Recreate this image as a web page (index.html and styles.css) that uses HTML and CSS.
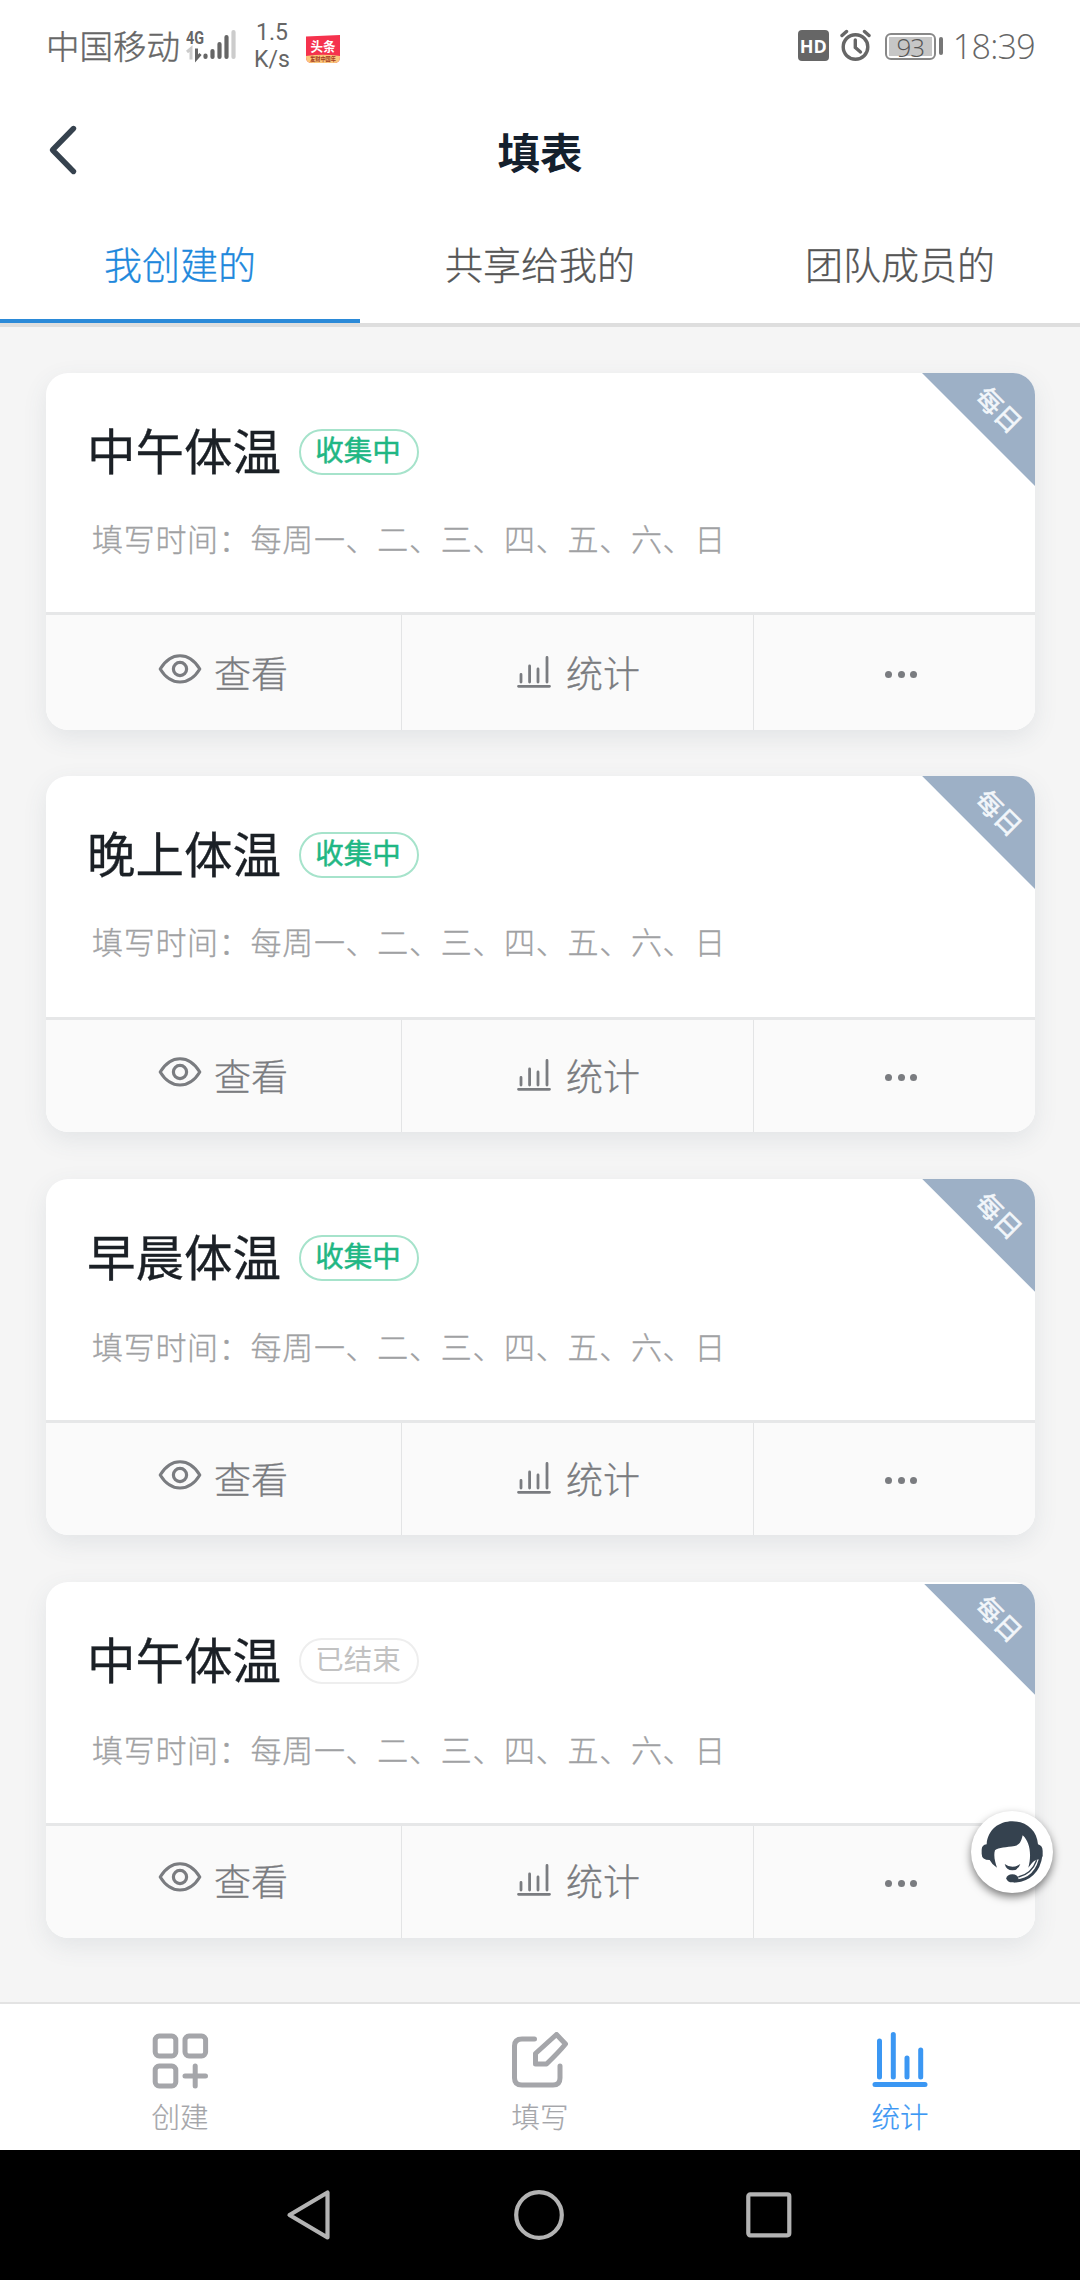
FILE: index.html
```html
<!DOCTYPE html>
<html lang="zh-CN">
<head>
<meta charset="utf-8">
<title>填表</title>
<link rel="stylesheet" href="styles.css">
</head>
<body>
<svg class="defs" width="0" height="0" aria-hidden="true">
  <symbol id="eye" viewBox="0 0 44 32">
    <path d="M2.2 16C8 6.500 14.500 2.800 22 2.800S36 6.500 41.800 16C36 25.500 29.500 29 22 29S8 25.500 2.200 16Z" fill="none" stroke="currentColor" stroke-width="3.100" stroke-linejoin="round"/>
    <circle cx="22" cy="16" r="6.600" fill="none" stroke="currentColor" stroke-width="3.200"/>
  </symbol>
  <symbol id="bars" viewBox="0 0 34 32">
    <path d="M1.500 30.300H32.500M4 26V18.500M12.600 26V10M21 26V13M30 26V1.500" fill="none" stroke="currentColor" stroke-width="2.800" stroke-linecap="round"/>
  </symbol>
</svg>

<header class="status">
  <div class="status-left">
    <span class="carrier">中国移动</span>
    <svg class="signal" width="52" height="36" viewBox="0 0 52 36">
      <text x="0" y="15.500" class="net" textLength="18" lengthAdjust="spacingAndGlyphs">4G</text>
      <path d="M1 24l4-3.500v11" fill="none" stroke="#ccc" stroke-width="3"/>
      <path d="M10.500 20.500v10l4-4.500" fill="none" stroke="#666" stroke-width="3"/>
      <g stroke="#666" stroke-width="4.200" stroke-linecap="round">
        <path d="M19.500 27.500v1.500M26.500 23v6M33.500 16v13M40.500 9v20"/>
        <path stroke="#ccc" d="M47.500 4v25"/>
      </g>
    </svg>
    <span class="speed">1.5<br>K/s</span>
    <svg class="news" width="34" height="29" viewBox="0 0 34 29">
      <path d="M0 1.500L34 0V22Q34 28 28 28H6Q0 28 0 22Z" fill="#f5324d"/>
      <path d="M0 21Q17 18.500 34 21V22Q34 28 28 28H6Q0 28 0 22Z" fill="#fbc77c"/>
      <text x="17" y="16" class="news-name" textLength="25" lengthAdjust="spacingAndGlyphs">头条</text>
      <text x="17" y="26" class="news-sub" textLength="26" lengthAdjust="spacingAndGlyphs">发财中国年</text>
    </svg>
  </div>
  <div class="status-right">
    <span class="hd">HD</span>
    <svg class="alarm" width="31" height="32" viewBox="0 0 31 32">
      <circle cx="15.500" cy="18" r="12.300" fill="none" stroke="#666" stroke-width="3.400"/>
      <path d="M15.300 11V18.500L20.500 23" fill="none" stroke="#666" stroke-width="3.400" stroke-linecap="round"/>
      <path d="M2 6.500L6.500 2.500M29 6.500L24.500 2.500" stroke="#666" stroke-width="3.400" stroke-linecap="round"/>
    </svg>
    <span class="battery"><span class="level">93</span></span>
    <span class="nub"></span>
    <span class="clock">18:39</span>
  </div>
</header>

<div class="titlebar">
  <svg class="back" width="32" height="52" viewBox="0 0 32 52">
    <path d="M26.500 4.500L5.500 26L26.500 47.500" fill="none" stroke="#36424e" stroke-width="5.400" stroke-linecap="round" stroke-linejoin="round"/>
  </svg>
  <h1>填表</h1>
</div>

<nav class="tabs">
  <a class="tab active">我创建的</a>
  <a class="tab">共享给我的</a>
  <a class="tab">团队成员的</a>
</nav>

<main class="list">
  <article class="card">
    <div class="info">
      <div class="heading"><h2>中午体温</h2><span class="badge">收集中</span></div>
      <p>填写时间：每周一、二、三、四、五、六、日</p>
    </div>
    <div class="actions">
      <a class="view"><svg class="eye"><use href="#eye"/></svg>查看</a>
      <a class="stats"><svg class="bars"><use href="#bars"/></svg>统计</a>
      <a class="more"><i></i><i></i><i></i></a>
    </div>
    <div class="ribbon"><span>每日</span></div>
  </article>
  <article class="card">
    <div class="info">
      <div class="heading"><h2>晚上体温</h2><span class="badge">收集中</span></div>
      <p>填写时间：每周一、二、三、四、五、六、日</p>
    </div>
    <div class="actions">
      <a class="view"><svg class="eye"><use href="#eye"/></svg>查看</a>
      <a class="stats"><svg class="bars"><use href="#bars"/></svg>统计</a>
      <a class="more"><i></i><i></i><i></i></a>
    </div>
    <div class="ribbon"><span>每日</span></div>
  </article>
  <article class="card">
    <div class="info">
      <div class="heading"><h2>早晨体温</h2><span class="badge">收集中</span></div>
      <p>填写时间：每周一、二、三、四、五、六、日</p>
    </div>
    <div class="actions">
      <a class="view"><svg class="eye"><use href="#eye"/></svg>查看</a>
      <a class="stats"><svg class="bars"><use href="#bars"/></svg>统计</a>
      <a class="more"><i></i><i></i><i></i></a>
    </div>
    <div class="ribbon"><span>每日</span></div>
  </article>
  <article class="card ended">
    <div class="info">
      <div class="heading"><h2>中午体温</h2><span class="badge">已结束</span></div>
      <p>填写时间：每周一、二、三、四、五、六、日</p>
    </div>
    <div class="actions">
      <a class="view"><svg class="eye"><use href="#eye"/></svg>查看</a>
      <a class="stats"><svg class="bars"><use href="#bars"/></svg>统计</a>
      <a class="more"><i></i><i></i><i></i></a>
    </div>
    <div class="ribbon"><span>每日</span></div>
  </article>
</main>

<a class="support">
  <svg width="82" height="82" viewBox="214 752 246 246">
    <g fill="#35424f">
      <path d="M261 852C264 808 298 783 338 783C380 783 412 810 415 852Q429 856 429 872V884Q428 897 412 898Q402 900 397 908L386 922C396 885 392 846 369 825C364 847 358 854 345 857C320 861 297 861 286 870C281 885 286 905 292 922Q277 913 270 899Q246 899 246 880V868Q246 854 261 852Z"/>
      <path d="M315 911Q338 928 362 911Q356 930 338 930Q320 930 315 911Z"/>
      <ellipse cx="338" cy="954" rx="18" ry="12"/>
    </g>
    <path d="M424 884C418 932 388 962 342 962" fill="none" stroke="#35424f" stroke-width="9"/>
    <path d="M411 900C402 925 385 944 356 950" fill="none" stroke="#35424f" stroke-width="4"/>
  </svg>
</a>

<nav class="bottom">
  <a>
    <svg width="58" height="58" viewBox="0 0 58 58" fill="none" stroke="currentColor" stroke-width="5">
      <rect x="4.200" y="4" width="20.600" height="20" rx="4"/>
      <rect x="34" y="4" width="20.600" height="20" rx="4"/>
      <rect x="4.200" y="34" width="20.600" height="20" rx="4"/>
      <path d="M34 44H54.500M44.200 34V54" stroke-linecap="round"/>
    </svg>
    <span>创建</span>
  </a>
  <a>
    <svg width="58" height="58" viewBox="0 0 58 58" fill="none" stroke="currentColor" stroke-width="5" stroke-linecap="round" stroke-linejoin="round">
      <path d="M23.500 7H11Q3.500 7 3.500 14V46Q3.500 53 11 53H42Q49 53 49 46V34"/>
      <path d="M45.500 2.500L54.500 12Q48 20 35.500 32H24.500V21.500Z"/>
    </svg>
    <span>填写</span>
  </a>
  <a class="current">
    <svg width="58" height="58" viewBox="0 0 58 58" fill="none" stroke="currentColor" stroke-width="5" stroke-linecap="round">
      <path d="M4 52.500H54M8.500 45V9M22.300 45V2.500M36 45V26M49.700 45V18"/>
    </svg>
    <span>统计</span>
  </a>
</nav>

<footer class="system">
  <svg width="46" height="52" viewBox="0 0 46 52"><path d="M41.500 3.500V48.500L3.500 26Z" fill="none" stroke="#b3b3b3" stroke-width="4.200" stroke-linejoin="round"/></svg>
  <svg width="52" height="52" viewBox="0 0 52 52"><circle cx="26" cy="26" r="22.800" fill="none" stroke="#b3b3b3" stroke-width="4.200"/></svg>
  <svg width="46" height="46" viewBox="0 0 46 46"><rect x="2.300" y="2.300" width="41" height="41" rx="2" fill="none" stroke="#b3b3b3" stroke-width="4.200"/></svg>
</footer>
</body>
</html>
```
FILE: styles.css
```css
* { box-sizing: border-box; margin: 0; padding: 0; }

body {
  width: 1080px;
  height: 2280px;
  display: flex;
  flex-direction: column;
  overflow: hidden;
  background: #f5f5f5;
  font-family: "Noto Sans CJK SC", "Noto Sans", sans-serif;
  font-weight: 300;
}

svg { display: block; flex: none; }
.defs { position: absolute; }

/* Status bar */
.status {
  height: 92px;
  flex: none;
  display: flex;
  justify-content: space-between;
  padding: 0 45px 0 46px;
  background: #fff;
  color: #666;
}
.status-left, .status-right { display: flex; align-items: center; }
.carrier { font-size: 33.5px; line-height: 40px; margin-top: -3px; -webkit-text-stroke: .4px; }
.signal { margin: -1px 0 0 6px; }
.net { font: 700 18px "Roboto", sans-serif; fill: #666; }
.speed {
  width: 60px;
  margin-left: 4px;
  text-align: center;
  font: 400 23px/27px "Roboto", sans-serif;
}
.news { margin: 6px 0 0 4px; }
.news-name { font: 700 13px "Noto Sans CJK SC", sans-serif; fill: #fff; text-anchor: middle; }
.news-sub { font: 700 6px "Noto Sans CJK SC", sans-serif; fill: #a33a20; text-anchor: middle; }
.hd {
  width: 31px;
  height: 31px;
  border-radius: 4px;
  background: #666;
  color: #fff;
  text-align: center;
  font: 700 18px/32px "Open Sans", sans-serif;
  margin-top: -2px;
}
.alarm { margin: -2px 0 0 11px; }
.battery {
  width: 51px;
  height: 27px;
  margin-left: 14px;
  padding: 2px;
  border: 2px solid #888;
  border-radius: 6px;
}
.level {
  display: block;
  width: 43px;
  height: 19px;
  background: #c6c6c6;
  font: 300 26px/20px "Open Sans", sans-serif;
  letter-spacing: -1px;
  text-align: center;
  color: #555;
}
.nub { width: 4px; height: 18px; margin: 0 0 0 3px; border-radius: 2px; background: #777; }
.clock { margin: -1px 0 0 10px; font: 300 34px/40px "Open Sans", sans-serif; letter-spacing: -0.7px; }

/* Title bar */
.titlebar {
  height: 118px;
  flex: none;
  display: grid;
  grid-template-columns: 1fr auto 1fr;
  align-items: center;
  background: #fff;
}
.back { margin: -2px 0 0 47px; }
h1 { font-size: 42.5px; font-weight: 700; line-height: 60px; color: #14202d; }

/* Tabs */
.tabs {
  height: 117px;
  flex: none;
  display: flex;
  background: linear-gradient(#fff, #fff) top / 100% 113px no-repeat #dedede;
}
.tab {
  flex: 1;
  height: 113px;
  text-align: center;
  font-size: 38px;
  line-height: 105px;
  color: #555;
  -webkit-text-stroke: .3px;
}
.tab.active { color: #1e88dc; border-bottom: 4px solid #2b8ad8; }

/* Card list */
.list {
  flex: 1;
  display: flex;
  flex-direction: column;
  gap: 46.300px;
  padding: 46px 45px 0 46px;
}
.card {
  position: relative;
  height: 356.600px;
  flex: none;
  display: flex;
  flex-direction: column;
  border-radius: 22px;
  overflow: hidden;
  background: #fff;
  box-shadow: 0 8px 24px rgba(70, 90, 110, .1);
}
.info { height: 239px; padding: 43px 0 0 41px; }
.heading { display: flex; align-items: center; height: 66px; gap: 18px; }
h2 { width: 194px; white-space: nowrap; font-size: 48.5px; font-weight: 400; line-height: 66px; color: #1b2026; -webkit-text-stroke: .3px; }
.badge {
  width: 120px;
  height: 46px;
  margin-top: 6px;
  border: 2.500px solid #a6e3cb;
  border-radius: 24px;
  text-align: center;
  font-size: 28.500px;
  font-weight: 400;
  line-height: 35px;
  color: #1fb784;
  -webkit-text-stroke: .5px;
  text-indent: -2px;
}
.ended .badge { border-color: #eee; color: #c2c2c2; -webkit-text-stroke: 0; }
.info p {
  margin: 36px 0 0 5px;
  font-size: 31px;
  line-height: 40px;
  letter-spacing: .7px;
  color: #a0a1a3;
  -webkit-text-stroke: .3px;
}
.actions {
  flex: 1;
  display: grid;
  grid-template-columns: 355px 352px 1fr;
  border-top: 3px solid #e6e7e8;
  background: #fafafa;
  font-size: 37px;
  color: #7a7c80;
  -webkit-text-stroke: .3px;
}
.actions a { display: flex; align-items: center; padding-bottom: 1px; }
.actions a + a { border-left: 1px solid #e3e4e5; }
.view { padding-left: 112px; gap: 12px; }
.stats { padding-left: 115px; gap: 15px; }
.eye { width: 44px; height: 32px; margin-top: -6px; }
.bars { width: 34px; height: 32px; }
.more i { width: 7px; height: 7px; border-radius: 50%; background: #7a7c80; }
.actions .more { justify-content: center; gap: 5.200px; padding: 5px 0 0 13px; }

.card + .card .info { height: 241.500px; }
.card + .card .actions a { padding-bottom: 3.500px; }
.card + .card .actions .more { padding: 2.500px 0 0 13px; }
.card:nth-child(n + 3) p { margin-top: 38px; }

.ribbon {
  position: absolute;
  top: 0;
  right: 0;
  width: 113px;
  height: 113px;
  background: #9db0c6;
  clip-path: polygon(0 0, 100% 0, 100% 100%);
}
.ribbon span {
  position: absolute;
  left: 48px;
  top: 18px;
  width: 60px;
  text-align: center;
  transform: rotate(45deg);
  font-size: 26px;
  font-weight: 400;
  line-height: 36px;
  color: #f2f6fa;
  -webkit-text-stroke: .6px;
}
.ended .ribbon { top: 2px; width: 111px; height: 111px; }
.ended .ribbon span { left: 46px; top: 16px; }

/* Floating help button */
.support {
  position: absolute;
  left: 971px;
  top: 1811px;
  width: 82px;
  height: 82px;
  border-radius: 50%;
  background: #fff;
  box-shadow: 0 4px 8px rgba(0, 0, 0, .5);
}

/* App navigation */
.bottom {
  height: 148px;
  flex: none;
  display: grid;
  grid-template-columns: repeat(3, 1fr);
  border-top: 2px solid #e3e3e3;
  background: #fff;
  color: #a5a6aa;
}
.bottom a { display: flex; flex-direction: column; align-items: center; padding-top: 28px; gap: 6px; }
.bottom span { font-size: 28.500px; line-height: 40px; -webkit-text-stroke: .2px; }
.bottom .current { color: #3b97f3; }

/* Android navigation */
.system {
  height: 130px;
  flex: none;
  display: flex;
  align-items: center;
  justify-content: space-between;
  padding: 0 288px 0 286px;
  background: #000;
}
```
